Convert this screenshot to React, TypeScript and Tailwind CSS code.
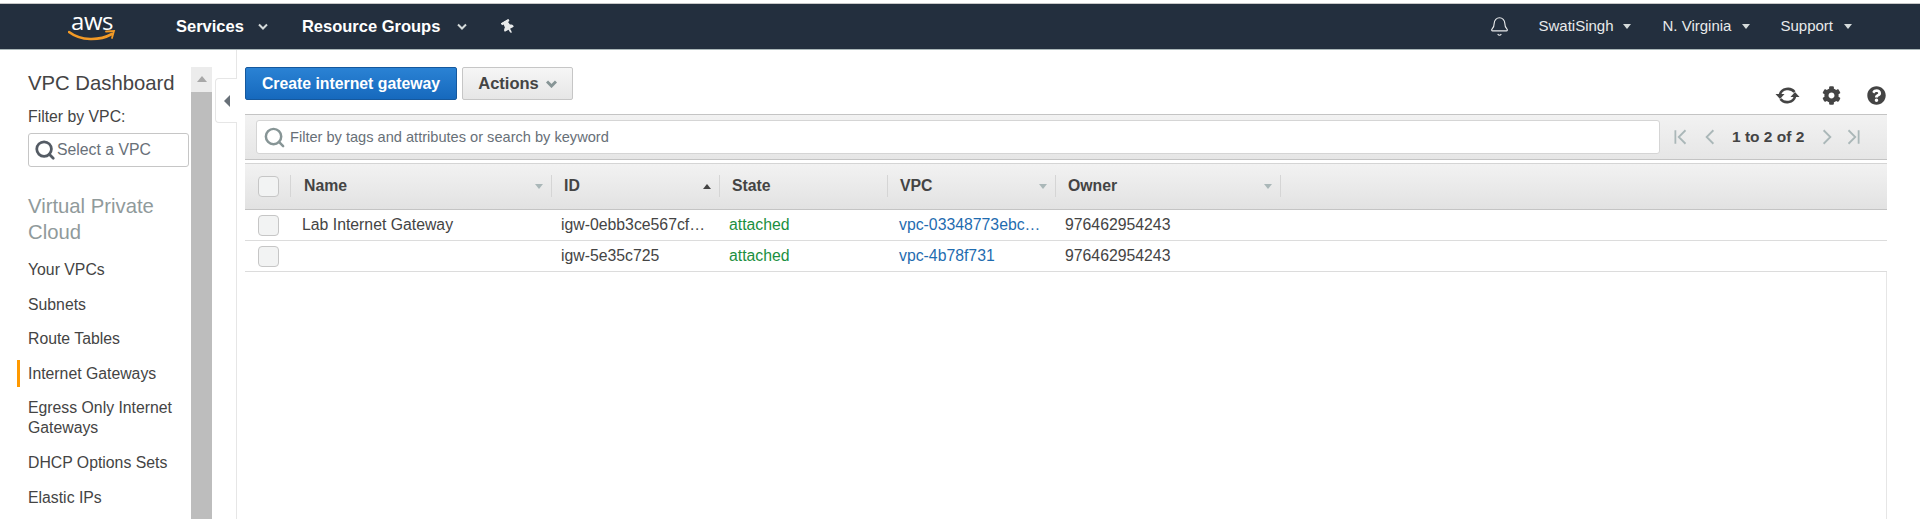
import { Bell, Search } from "lucide-react";
import { FaCog, FaQuestionCircle, FaThumbtack } from "react-icons/fa";

const sideLinks = ["Your VPCs", "Subnets", "Route Tables"];
const sideLinksAfter = ["DHCP Options Sets", "Elastic IPs"];

const rows = [
  { name: "Lab Internet Gateway", id: "igw-0ebb3ce567cf…", vpc: "vpc-03348773ebc…" },
  { name: "", id: "igw-5e35c725", vpc: "vpc-4b78f731" },
];

const columnClass = "grid grid-cols-[46px_261px_168px_168px_168px_225px_1fr]";

function Caret({ className }: { className: string }) {
  return <span className={`h-0 w-0 border-x-[4px] border-t-[5px] border-x-transparent ${className}`} />;
}

function Chevron() {
  return (
    <svg width="10" height="7" viewBox="0 0 10 7" fill="none" stroke="#d5dbdb" strokeWidth="2">
      <path d="M1 1.5l4 4 4-4" />
    </svg>
  );
}

function Pager({ d }: { d: string }) {
  return (
    <svg width="18" height="18" viewBox="0 0 16 16" fill="none" stroke="#aab7b8" strokeWidth="1.6">
      <path d={d} />
    </svg>
  );
}

function Checkbox() {
  return <div className="h-[21px] w-[21px] rounded-[4px] border border-[#c6c6c6] bg-[#f2f3f3]" />;
}

function HeaderCell({ label, sort, pad }: { label: string; sort?: "up" | "down"; pad: string }) {
  return (
    <div className="flex h-[44px] items-center">
      <div className={`flex h-[22px] flex-1 items-center justify-between border-r border-[#d5d5d5] pr-[8px] ${pad}`}>
        <span className="text-[15.8px] font-bold text-[#444444]">{label}</span>
        {sort === "down" && <Caret className="border-t-[#aab7b8]" />}
        {sort === "up" && (
          <span className="h-0 w-0 border-x-[4px] border-b-[5px] border-x-transparent border-b-[#444444]" />
        )}
      </div>
    </div>
  );
}

export default function App() {
  return (
    <div className="flex h-[519px] flex-col overflow-hidden bg-white font-['Liberation_Sans',Arial,sans-serif] text-[#444444]">
      <div className="h-[4px] shrink-0 border-b border-[#c8c8c8] bg-white" />

      {/* top nav */}
      <header className="flex h-[46px] shrink-0 items-center border-b border-[#aab7b8] bg-[#232f3e] text-white">
        <div className="ml-[68px] flex w-[48px] flex-col items-center">
          <span className="font-['Open_Sans',sans-serif] text-[24px] leading-[20px] tracking-[-0.5px]">aws</span>
          <svg width="48" height="12" viewBox="0 0 48 12" fill="none" className="mt-[-1px]">
            <path d="M1 2c12 9 30 9 43 2" stroke="#f29a26" strokeWidth="2.6" strokeLinecap="round" />
            <path d="M38 1.5l8-0.5-2 7" stroke="#f29a26" strokeWidth="1.8" strokeLinecap="round" />
          </svg>
        </div>
        <div className="ml-[60px] flex items-center gap-[14px] text-[16.5px] font-bold">
          <span>Services</span>
          <Chevron />
        </div>
        <div className="ml-[34px] flex items-center gap-[17px] text-[16.5px] font-bold">
          <span>Resource Groups</span>
          <Chevron />
        </div>
        <FaThumbtack className="ml-[34px] -rotate-[30deg] text-[14px] text-[#e8eaeb]" />

        <div className="ml-auto flex items-center text-[15px] text-[#e8eaeb]">
          <Bell size={21} strokeWidth={1.3} className="mr-[28px]" />
          <span>SwatiSingh</span>
          <Caret className="ml-[9px] mr-[32px] border-t-[#d5dbdb]" />
          <span>N. Virginia</span>
          <Caret className="ml-[11px] mr-[30px] border-t-[#d5dbdb]" />
          <span>Support</span>
          <Caret className="ml-[11px] mr-[68px] border-t-[#d5dbdb]" />
        </div>
      </header>

      <div className="relative flex min-h-0 flex-1">
        {/* side nav */}
        <aside className="w-[191px] shrink-0 pl-[28px] pr-[2px] pt-[19px]">
          <div className="text-[20.3px] leading-[28px] text-[#444444]">VPC Dashboard</div>
          <div className="mt-[11px] text-[15.8px] leading-[18px]">Filter by VPC:</div>
          <div className="mt-[7px] flex h-[34px] items-center rounded-[3px] border border-[#c6c6c6] pl-[5px] text-[#687078]">
            <Search size={22} strokeWidth={3} className="mr-[1px] text-[#545b64]" />
            <span className="text-[15.8px]">Select a VPC</span>
          </div>
          <div className="mt-[26px] text-[20.3px] leading-[26px] text-[#909a9b]">
            Virtual Private
            <br />
            Cloud
          </div>
          <div className="relative mt-[13px] text-[15.8px]">
            {sideLinks.map((link) => (
              <div key={link} className="h-[34.5px] leading-[24px]">
                {link}
              </div>
            ))}
            <div className="relative h-[34.5px] leading-[24px]">
              <span className="absolute left-[-11px] top-[-2px] h-[27px] w-[3px] bg-[#ff9900]" />
              Internet Gateways
            </div>
            <div className="mb-[13px] mt-[2px] leading-[20px]">Egress Only Internet Gateways</div>
            {sideLinksAfter.map((link) => (
              <div key={link} className="h-[34.5px] leading-[24px]">
                {link}
              </div>
            ))}
          </div>
        </aside>

        {/* scrollbar */}
        <div className="mt-[17px] flex w-[21px] shrink-0 flex-col">
          <div className="flex h-[25px] items-start justify-center bg-[#ececec] pt-[9px]">
            <span className="h-0 w-0 border-x-[5px] border-b-[6px] border-x-transparent border-b-[#a8a8a8]" />
          </div>
          <div className="flex-1 bg-[#bdbdbd]" />
        </div>

        {/* collapse handle */}
        <div className="absolute left-[215px] top-[28px] z-10 flex h-[45px] w-[22px] items-center rounded-l-[4px] border border-r-0 border-[#e6e6e6] bg-white pl-[8px]">
          <span className="h-0 w-0 border-y-[6px] border-r-[6px] border-y-transparent border-r-[#687078]" />
        </div>

        {/* main */}
        <main className="ml-[24px] flex min-w-0 flex-1 flex-col border-l border-[#e6e6e6] pl-[8px] pr-[33px]">
          <div className="flex h-[64px] shrink-0 pt-[17px]">
            <button className="h-[33px] w-[212px] rounded-[2px] border border-[#15589d] bg-gradient-to-b from-[#2a82d4] to-[#1669bd] text-[15.8px] font-bold text-white">
              Create internet gateway
            </button>
            <button className="ml-[5px] flex h-[33px] w-[111px] items-center justify-center gap-[7px] rounded-[2px] border border-[#c6c6c6] bg-gradient-to-b from-[#f6f6f6] to-[#e6e6e6] text-[16.5px] font-bold text-[#444444]">
              Actions
              <svg width="11" height="8" viewBox="0 0 11 8" fill="none" stroke="#879596" strokeWidth="3">
                <path d="M1 1.5l4.5 4.5 4.5-4.5" />
              </svg>
            </button>
            <div className="ml-auto mr-[1px] mt-[16px] flex h-[24px] items-center text-[#444444]">
              <svg width="25" height="19" viewBox="0 0 25 19" fill="none">
                <path d="M5 8.5a8 7 0 0 1 14.5-2.5" stroke="#444444" strokeWidth="2.6" />
                <path d="M20 10.5a8 7 0 0 1-14.5 2.5" stroke="#444444" strokeWidth="2.6" />
                <path d="M0.5 8h9l-4.5 5z" fill="#444444" />
                <path d="M24.5 11h-9l4.5-5z" fill="#444444" />
              </svg>
              <FaCog className="ml-[22px] text-[19px]" />
              <FaQuestionCircle className="ml-[26px] text-[19px]" />
            </div>
          </div>

          {/* filter bar */}
          <div className="flex h-[46px] shrink-0 items-center border-y border-[#c4c4c4] bg-gradient-to-b from-[#f2f2f2] to-[#e6e6e6] pl-[11px]">
            <div className="flex h-[34px] w-[1404px] items-center rounded-[3px] border border-[#d5d5d5] bg-white pl-[6px]">
              <Search size={23} strokeWidth={2.6} className="mr-[4px] text-[#879596]" />
              <span className="pt-[1px] text-[14.6px] text-[#687078]">Filter by tags and attributes or search by keyword</span>
            </div>
            <div className="ml-[12px] flex items-center">
              <Pager d="M3 2v12M12 2l-6 6 6 6" />
              <div className="ml-[11px]">
                <Pager d="M11 2l-6 6 6 6" />
              </div>
              <span className="ml-[13px] text-[15.5px] font-bold text-[#444444]">1 to 2 of 2</span>
              <div className="ml-[14px]">
                <Pager d="M5 2l6 6-6 6" />
              </div>
              <div className="ml-[8px]">
                <Pager d="M4 2l6 6-6 6M13 2v12" />
              </div>
            </div>
          </div>

          {/* table */}
          <div className={`${columnClass} mt-[3px] h-[47px] shrink-0 border-y border-b-[#c4c4c4] border-t-[#d5d5d5] bg-gradient-to-b from-[#f2f2f2] to-[#e2e2e2]`}>
            <div className="flex h-[44px] items-center">
              <div className="flex h-[22px] w-[46px] items-center justify-center border-r border-[#d5d5d5] pl-[1px]">
                <Checkbox />
              </div>
            </div>
            <HeaderCell label="Name" sort="down" pad="pl-[13px]" />
            <HeaderCell label="ID" sort="up" pad="pl-[12px]" />
            <HeaderCell label="State" pad="pl-[12px]" />
            <HeaderCell label="VPC" sort="down" pad="pl-[12px]" />
            <HeaderCell label="Owner" sort="down" pad="pl-[12px]" />
          </div>
          {rows.map((row) => (
            <div key={row.id} className={`${columnClass} h-[31px] shrink-0 items-center border-b border-[#dcdcdc] text-[15.8px]`}>
              <div className="flex justify-center pl-[1px]">
                <Checkbox />
              </div>
              <div className="pl-[11px]">{row.name}</div>
              <div className="pl-[9px]">{row.id}</div>
              <div className="pl-[9px] text-[#1b8f40]">attached</div>
              <div className="pl-[11px] text-[#1f6cb0]">{row.vpc}</div>
              <div className="pl-[9px]">976462954243</div>
              <div />
            </div>
          ))}
          <div className="flex-1 border-r border-[#e6e6e6]" />
        </main>
      </div>
    </div>
  );
}
